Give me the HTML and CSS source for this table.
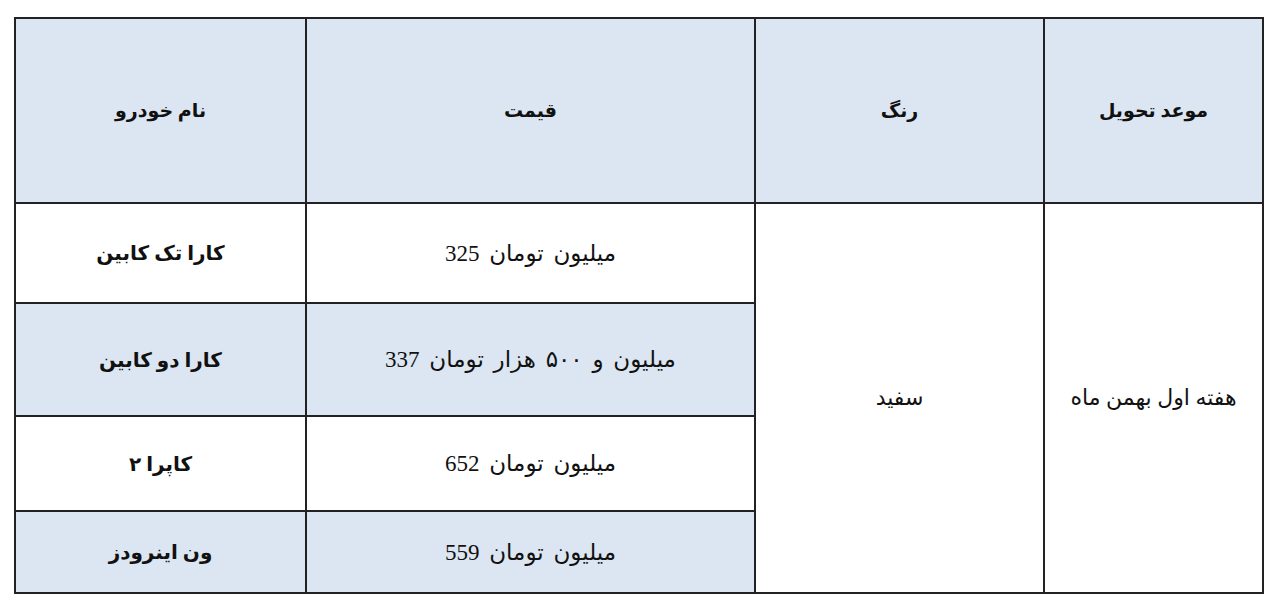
FILE: index.html
```html
<!DOCTYPE html>
<html lang="fa">
<head>
<meta charset="utf-8">
<link rel="stylesheet" href="styles.css">
</head>
<body>
<table class="price-table" dir="ltr">
  <colgroup>
    <col class="c-name">
    <col class="c-price">
    <col class="c-color">
    <col class="c-date">
  </colgroup>
  <tr class="head">
    <th>نام خودرو</th>
    <th>قیمت</th>
    <th>رنگ</th>
    <th>موعد تحویل</th>
  </tr>
  <tr class="r1">
    <td class="name">کارا تک کابین</td>
    <td class="price">325 میلیون تومان</td>
    <td class="merged" rowspan="4">سفید</td>
    <td class="merged" rowspan="4">هفته اول بهمن ماه</td>
  </tr>
  <tr class="r2 alt">
    <td class="name">کارا دو کابین</td>
    <td class="price">337 میلیون و ۵۰۰ هزار تومان</td>
  </tr>
  <tr class="r3">
    <td class="name">کاپرا ۲</td>
    <td class="price">652 میلیون تومان</td>
  </tr>
  <tr class="r4 alt">
    <td class="name">ون اینرودز</td>
    <td class="price">559 میلیون تومان</td>
  </tr>
</table>
</body>
</html>
```
FILE: styles.css
```css
html, body {
  margin: 0;
  padding: 0;
  background: #ffffff;
}

body {
  font-family: "Liberation Serif", "DejaVu Sans", serif;
  color: #111111;
}

.price-table {
  margin: 17px 0 0 14px;
  border-collapse: collapse;
  table-layout: fixed;
  width: 1248px;
}

.c-name { width: 291px; }
.c-price { width: 449px; }
.c-color { width: 289px; }
.c-date { width: 219px; }

.price-table th,
.price-table td {
  border: 2px solid #222222;
  text-align: center;
  vertical-align: middle;
  padding: 0;
  font-size: 23px;
}

.price-table th {
  background: #dce6f2;
  font-weight: bold;
  font-size: 19px;
}

.price-table td.name {
  font-weight: bold;
  font-size: 20px;
}

.price-table td.price {
  word-spacing: 4px;
}

.head { height: 185px; }
.r1 { height: 100px; }
.r2 { height: 113px; }
.r3 { height: 95px; }
.r4 { height: 82px; }

.alt td {
  background: #dce6f2;
}

.price-table td.merged {
  background: #ffffff;
  font-size: 22px;
}
```
